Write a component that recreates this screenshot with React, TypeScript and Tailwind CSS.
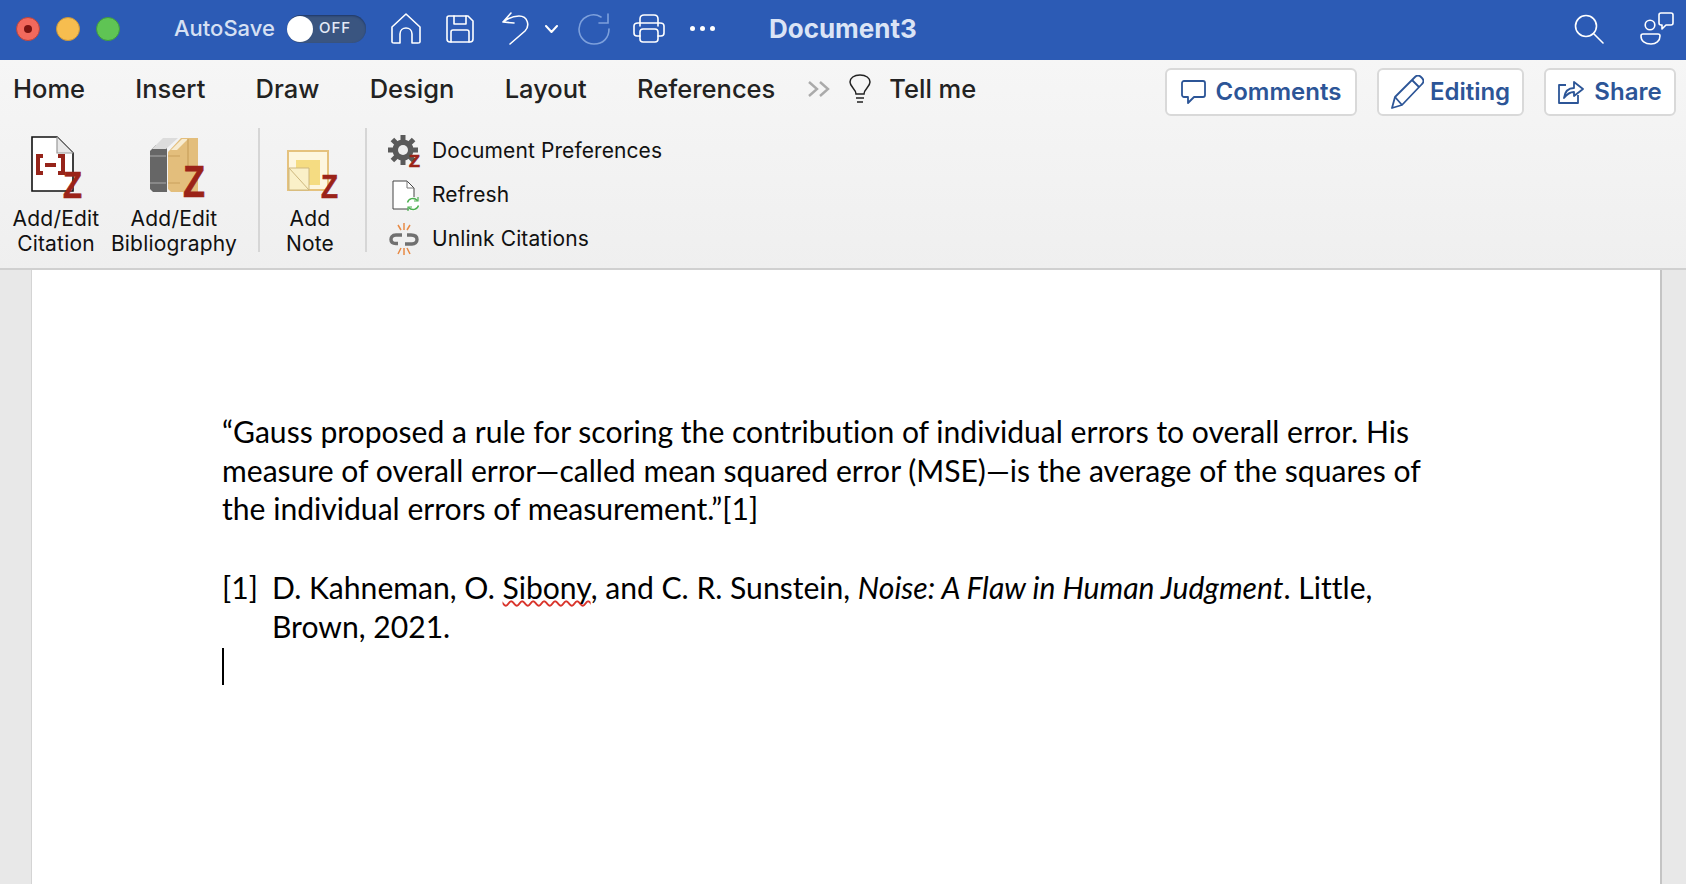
import React from 'react';

// Zotero's red Z, stretched to the box it has in each ribbon icon
const Z = ({ x, y, h, w, color = '#9b2318' }: { x: number; y: number; h: number; w: number; color?: string }) => (
  <text x={x} y={y} fontSize={h / 0.69} textLength={w} lengthAdjust="spacingAndGlyphs" fontWeight={700} fontFamily="Liberation Sans, sans-serif" fill={color} stroke={color} strokeWidth={0.7}>Z</text>
);

const WhiteIcon = ({ w, h, vb, children, className = '' }: { w: number; h: number; vb: string; children: React.ReactNode; className?: string }) => (
  <svg width={w} height={h} viewBox={vb} fill="none" stroke="white" strokeWidth={1.6} strokeLinejoin="round" strokeLinecap="round" className={`shrink-0 ${className}`}>
    {children}
  </svg>
);

const CitationIcon = () => (
  <svg width="54" height="64" viewBox="0 0 54 64" className="shrink-0 overflow-visible">
    <path d="M3 1H28L44 17V55H3Z" fill="white" stroke="#111" strokeWidth="1.6" />
    <path d="M28 1V17H44" fill="#e8e8e8" stroke="#999" strokeWidth="1.2" />
    <path d="M14 20H9V37H14M29 20H34V37H29M16 29H27" fill="none" stroke="#96241a" strokeWidth="4" />
    <Z x={34} y={62} h={25} w={19} />
  </svg>
);

const BibliographyIcon = () => (
  <svg width="58" height="64" viewBox="0 0 58 64" className="ml-[6px] shrink-0 overflow-visible">
    <path d="M2 15L8 9H19V56H5L2 53Z" fill="#666" />
    <path d="M4 13L15 2H30L18 13Z" fill="#dcdcdc" />
    <path d="M2 20H18M2 47H18" stroke="#aaa" strokeWidth="1.2" />
    <path d="M20 16L33 2H50V56H23L20 53Z" fill="#e3be7c" />
    <path d="M23 14L34 3H40L29 14Z" fill="#f7ebd0" />
    <path d="M40 3V30" stroke="#c9a05c" strokeWidth="1.2" />
    <path d="M20 20H32M20 47H32" stroke="#c9a05c" strokeWidth="1.2" />
    <Z x={35} y={61} h={30} w={22} />
  </svg>
);

const NoteIcon = () => (
  <svg width="56" height="50" viewBox="0 0 56 50" className="shrink-0 overflow-visible">
    <rect x="6" y="1" width="40" height="39" fill="#fdf6df" stroke="#e5c27e" strokeWidth="2" />
    <rect x="14" y="10" width="24" height="25" fill="#f5dc82" />
    <path d="M7 18H27V40H7Z" fill="#faf0c8" stroke="#cdb77e" strokeWidth="1" />
    <path d="M7 18L27 40" stroke="#cdb77e" strokeWidth="1" />
    <Z x={39} y={48} h={23} w={17} />
  </svg>
);

const GearIcon = () => (
  <svg width="32" height="32" viewBox="0 0 32 32" className="overflow-visible">
    {[0, 45, 90, 135].map((a) => (
      <rect key={a} x="12.5" y="0" width="5" height="30" fill="#5a5a5a" transform={`rotate(${a} 15 15)`} />
    ))}
    <circle cx="15" cy="15" r="10.5" fill="#5a5a5a" />
    <circle cx="15" cy="15" r="5" fill="#eeeeee" />
    <Z x={21} y={32} h={12} w={11} />
  </svg>
);

const RefreshIcon = () => (
  <svg width="32" height="32" viewBox="0 0 32 32" fill="none">
    <path d="M5 2H19L26 9V30H5Z" fill="white" stroke="#444" strokeWidth="1" />
    <path d="M19 2V9H26" stroke="#777" strokeWidth="1" />
    <circle cx="25" cy="25" r="6.5" fill="white" stroke="white" strokeWidth="1" />
    <path d="M19.5 23.5C20.5 19.5 26 18 29.5 21.5M30.5 26.5C29.5 30.5 24 32 20.5 28.5" stroke="#4caf50" strokeWidth="1.4" />
    <path d="M30 18V22H26M20 32V28H24" stroke="#4caf50" strokeWidth="1.2" />
  </svg>
);

const UnlinkIcon = () => (
  <svg width="32" height="32" viewBox="0 0 32 32" fill="none">
    <path d="M14 12H8C4 12 3 14.5 3 16.5C3 19 5 20.5 8 20.5H10" stroke="#707070" strokeWidth="3.4" />
    <path d="M19 12H23C27 12 29 14 29 16.5C29 19 27 21 24 21H17" stroke="#707070" strokeWidth="3.4" />
    <path d="M16 0V7M10 2L13 7M22 2L19 7M16 25V32M10 31L13 25M22 31L19 25" stroke="#e88a45" strokeWidth="1.5" />
  </svg>
);

const TopBar = () => (
  <header className="flex h-[60px] shrink-0 items-center bg-[#2c5bb5] pb-[3px]">
    <div className="ml-4 flex w-[116px] shrink-0 gap-[16px]">
      <span className="flex h-6 w-6 items-center justify-center rounded-full border border-[#b8443d] bg-[#f2695c]">
        <span className="h-2 w-2 rounded-full bg-[#7a1410]" />
      </span>
      <span className="h-6 w-6 rounded-full border border-[#c9963a] bg-[#f6bd4f]" />
      <span className="h-6 w-6 rounded-full border border-[#3f9a3f] bg-[#5fc454]" />
    </div>
    <span className="ml-[42px] text-[22px] font-medium text-[#d6e0f3]">AutoSave</span>
    <span className="ml-[12px] flex h-[28px] w-[79px] items-center rounded-full bg-[#3a5580] shadow-[inset_0_1px_2px_#1d3768]">
      <span className="h-[26px] w-[26px] rounded-full bg-white" />
      <span className="ml-[6px] text-[15px] font-medium tracking-[1px] text-[#e4eaf6]">OFF</span>
    </span>
    <WhiteIcon w={30} h={31} vb="0 0 30 31" className="ml-[25px]">
      <path d="M1 14L15 1L29 14V29C29 30 28 30 27 30H21V21C21 13 9 13 9 21V30H3C2 30 1 30 1 29Z" />
    </WhiteIcon>
    <WhiteIcon w={28} h={28} vb="0 0 28 28" className="ml-[25px]">
      <path d="M3 1H22L27 6V24C27 26 26 27 24 27H4C2 27 1 26 1 24V3C1 2 2 1 3 1Z" />
      <path d="M8 1V9H20V1M5 27V17C5 15 6 15 7 15H21C22 15 23 15 23 17V27" />
    </WhiteIcon>
    <WhiteIcon w={28} h={33} vb="0 0 28 33" className="ml-[27px]">
      <path d="M10 1L2 10L13 11M2 10C6 7 12 4 18 4C27 4 29 14 24 19L9 32" />
    </WhiteIcon>
    <WhiteIcon w={13} h={8} vb="0 0 13 8" className="ml-[16px]">
      <path d="M1 1L6.5 7L12 1" strokeWidth={2} />
    </WhiteIcon>
    <svg width="34" height="34" viewBox="0 0 34 34" fill="none" stroke="#7da0dc" strokeWidth="1.6" strokeLinecap="round" className="ml-[19px] shrink-0">
      <path d="M24 5C16 0 3 4 2 17C2 26 9 32 17 32C26 32 32 26 32 17" />
      <path d="M31 2V11H22" />
    </svg>
    <WhiteIcon w={32} h={29} vb="0 0 32 29" className="ml-[22px]">
      <path d="M7 12V5C7 2 9 1 11 1H21C23 1 25 2 25 5V12" />
      <path d="M7 22H4C2 22 1 21 1 19V12C1 10 2 9 5 9H27C30 9 31 10 31 12V19C31 21 30 22 28 22H25" />
      <rect x="7" y="15" width="18" height="13" rx="3" />
    </WhiteIcon>
    <span className="ml-[25px] flex w-[25px] shrink-0 justify-between">
      <span className="h-[5px] w-[5px] rounded-full bg-white" />
      <span className="h-[5px] w-[5px] rounded-full bg-white" />
      <span className="h-[5px] w-[5px] rounded-full bg-white" />
    </span>
    <span className="ml-[54px] text-[26px] font-bold text-[#dbe4f5]">Document3</span>
    <WhiteIcon w={30} h={30} vb="0 0 30 30" className="ml-auto">
      <circle cx="12" cy="12" r="10.5" />
      <path d="M19.5 19.5L29 29" />
    </WhiteIcon>
    <WhiteIcon w={34} h={33} vb="0 0 34 33" className="ml-[36px] mr-[12px]">
      <circle cx="10" cy="13" r="4.8" />
      <path d="M3 22H18C19 22 20 23 20 24C20 29 16 32 11 32C5 32 1 29 1 24C1 23 2 22 3 22Z" />
      <path d="M19 3C19 2 20 1 21 1H31C32 1 33 2 33 3V11C33 12 32 13 31 13H26L22 17V13H21C20 13 19 12 19 11Z" />
    </WhiteIcon>
  </header>
);

const actionClass = 'flex h-[48px] items-center justify-center rounded-[6px] border-2 border-[#d9d9d9] bg-white text-[24px] font-semibold text-[#2c5597]';

const TabRow = () => (
  <div className="flex h-[58px] items-center text-[25.5px] font-medium text-[#222]">
    <nav className="ml-[13px] flex items-center gap-[50.3px]">
      <span>Home</span>
      <span>Insert</span>
      <span>Draw</span>
      <span>Design</span>
      <span>Layout</span>
      <span>References</span>
    </nav>
    <svg width="24" height="16" viewBox="0 0 24 16" fill="none" stroke="#aaa" strokeWidth="2.4" className="ml-[32px] shrink-0">
      <path d="M2 1L10 8L2 15M13 1L21 8L13 15" />
    </svg>
    <svg width="24" height="30" viewBox="0 0 24 30" fill="none" stroke="#222" strokeWidth="1.5" className="ml-[17px] shrink-0">
      <path d="M8 20C8 15 2 13 2 8C2 4 6 1 12 1C18 1 22 4 22 8C22 13 16 15 16 20Z" />
      <path d="M8 24H16M9 28H15" />
    </svg>
    <span className="ml-[17px]">Tell me</span>
    <div className="ml-auto mr-[10px] flex gap-[20px] self-start pt-[8px]">
      <span className={`${actionClass} w-[192px] gap-[10px]`}>
        <svg width="25" height="24" viewBox="0 0 25 24" fill="none" stroke="#2c5597" strokeWidth="1.8" strokeLinejoin="round" className="shrink-0">
          <path d="M3 1H22C23 1 24 2 24 3V15C24 16 23 17 22 17H13L7 23V17H3C2 17 1 16 1 15V3C1 2 2 1 3 1Z" />
        </svg>
        Comments
      </span>
      <span className={`${actionClass} w-[147px] gap-[6px]`}>
        <svg width="33" height="34" viewBox="0 0 33 34" fill="none" stroke="#2c5597" strokeWidth="1.8" strokeLinejoin="round" className="shrink-0">
          <path d="M1 33L4 22L24 2C26 0 28 0 30 2L31 3C33 5 33 7 31 9L11 30Z" />
          <path d="M4 22L11 30M21 5L28 12" />
        </svg>
        Editing
      </span>
      <span className={`${actionClass} w-[132px] gap-[10px]`}>
        <svg width="26" height="24" viewBox="0 0 26 24" fill="none" stroke="#2c5597" strokeWidth="1.8" strokeLinejoin="round" className="shrink-0">
          <path d="M8 5H1V23H20V15" />
          <path d="M6 18C7 11 10 8 16 8V2L25 9L16 16V12C12 12 9 14 6 18Z" />
        </svg>
        Share
      </span>
    </div>
  </div>
);

const BigButton = ({ icon, lines, className }: { icon: React.ReactNode; lines: string[]; className: string }) => (
  <div className={`flex flex-col items-center pt-[8px] ${className}`}>
    <div className="flex h-[64px] items-end">{icon}</div>
    <div className="mt-[7px] text-center text-[21px] leading-[24.5px] tracking-[0.2px] text-[#111]">
      {lines.map((l) => <div key={l}>{l}</div>)}
    </div>
  </div>
);

const SmallButton = ({ icon, label }: { icon: React.ReactNode; label: string }) => (
  <div className="flex h-[44px] items-center gap-[12px] text-[21px] tracking-[0.1px] text-[#111]">
    <span className="flex h-8 w-8 items-center justify-center">{icon}</span>
    <span>{label}</span>
  </div>
);

const Ribbon = () => (
  <div className="flex h-[152px] border-b-2 border-[#d0d0d0] pt-[10px]">
    <div className="ml-[12px] flex">
      <BigButton icon={<CitationIcon />} lines={['Add/Edit', 'Citation']} className="w-[88px]" />
      <BigButton icon={<BibliographyIcon />} lines={['Add/Edit', 'Bibliography']} className="w-[148px]" />
    </div>
    <div className="ml-[10px] h-[124px] w-[2px] bg-[#d6d6d6]" />
    <BigButton icon={<NoteIcon />} lines={['Add', 'Note']} className="w-[105px] pr-[5px]" />
    <div className="h-[124px] w-[2px] bg-[#d6d6d6]" />
    <div className="ml-[21px] pt-[1px]">
      <SmallButton icon={<GearIcon />} label="Document Preferences" />
      <SmallButton icon={<RefreshIcon />} label="Refresh" />
      <SmallButton icon={<UnlinkIcon />} label="Unlink Citations" />
    </div>
  </div>
);

export default function App() {
  return (
    <div className="flex h-[884px] w-[1686px] flex-col overflow-hidden bg-[#e8e8e8] font-['Inter',sans-serif]">
      <TopBar />
      <div className="shrink-0 bg-gradient-to-b from-[#f6f6f6] to-[#efefef]">
        <TabRow />
        <Ribbon />
      </div>
      <main className="ml-[31px] mr-[24px] flex-1 border-l border-r-2 border-l-[#d4d4d4] border-r-[#c4c4c4] bg-white pl-[190px] pr-[205px] pt-[142px] font-['Lato',sans-serif] text-[30.1px] leading-[38.7px] text-black [font-variant-ligatures:none]">
        <p>“Gauss proposed a rule for scoring the contribution of individual errors to overall error. His measure of overall error—called mean squared error (MSE)—is the average of the squares of the individual errors of measurement.”[1]</p>
        <div className="mt-[40px] flex">
          <span className="w-[50px] shrink-0">[1]</span>
          <p>
            D. Kahneman, O. <span className="underline decoration-wavy decoration-[#d9342b] decoration-2 [text-decoration-skip-ink:none]">Sibony</span>, and C. R. Sunstein, <em>Noise: A Flaw in Human Judgment</em>. Little, Brown, 2021.
          </p>
        </div>
        <div className="mt-[2px] h-[37px] w-[2px] bg-black" />
      </main>
    </div>
  );
}
